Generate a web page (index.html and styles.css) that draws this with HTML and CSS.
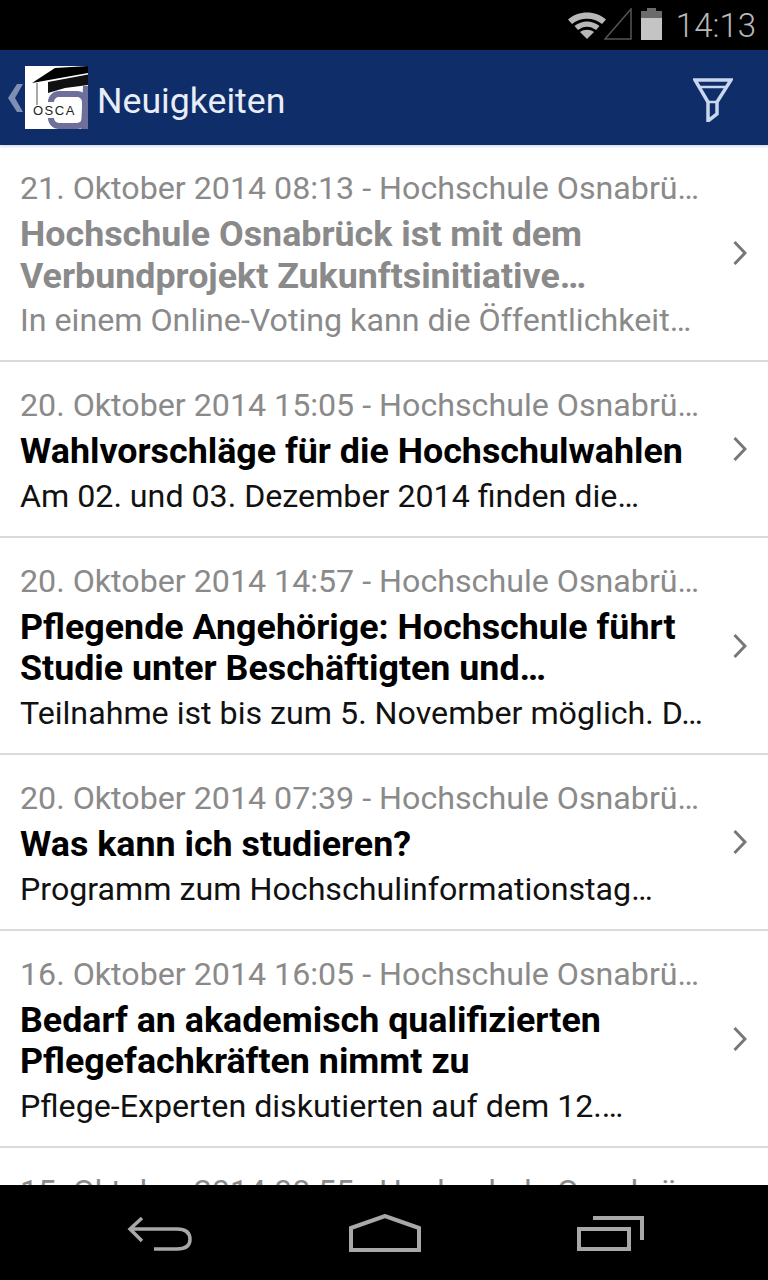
FILE: index.html
```html
<!DOCTYPE html>
<html lang="de">
<head>
  <meta charset="UTF-8">
  <title>Neuigkeiten</title>
  <link rel="stylesheet" href="styles.css">
</head>
<body>
<div class="status-bar">
  <svg class="wifi" width="40" height="30" viewBox="0 0 40 30">
    <path d="M1 10.500 C11 1 29 1 39 10.500 L35 15 C26.500 8 13.500 8 5 15 Z" fill="#b8b8b8"/>
    <path d="M7.500 17 C15 11 25 11 32.500 17 L29 21 C23.500 16.500 16.500 16.500 11 21 Z" fill="#b8b8b8"/>
    <path d="M13 23 C17 20 23 20 27 23 L20 30 Z" fill="#b8b8b8"/>
  </svg>
  <svg class="signal" width="28" height="32" viewBox="0 0 28 32">
    <path d="M1 31 L27 1 V31 Z" fill="none" stroke="#555" stroke-width="1.500"/>
  </svg>
  <svg class="battery" width="21" height="32" viewBox="0 0 21 32">
    <rect x="6" y="0" width="9" height="4" fill="#6b6b6b"/>
    <rect x="0" y="3" width="21" height="7" fill="#6b6b6b"/>
    <rect x="0" y="10" width="21" height="22" fill="#c4c4c4"/>
  </svg>
  <span class="clock">14:13</span>
</div>

<div class="action-bar">
  <svg class="back" width="15" height="28" viewBox="0 0 15 28">
    <path d="M9 0 H15 L7 14 L15 28 H9 L0 14 Z" fill="#7d8fb4"/>
  </svg>
  <svg class="logo" width="63" height="63" viewBox="0 0 63 63">
    <rect width="63" height="63" fill="#fff"/>
    <rect x="26" y="28" width="34" height="32" rx="8" fill="none" stroke="#6f7099" stroke-width="6"/>
    <path d="M58 20 H63 V63 H56 Z" fill="#6f7099"/>
    <rect x="8" y="36" width="42" height="16" fill="#fff"/>
    <path d="M7 17 L30 2 L63 0 V7 Z" fill="#000"/>
    <path d="M23 16 L63 8.500 V19 L40 22 L23 27 Z" fill="#111"/>
    <path d="M12 17 V39" stroke="#555" stroke-width="1"/>
    <text class="logo-text" x="8" y="49">OSCA</text>
  </svg>
  <h1 class="page-title">Neuigkeiten</h1>
  <svg class="filter" width="40" height="44" viewBox="0 0 40 44">
    <path d="M2 2 H38 L24 24 V36 L15 43 V24 Z" fill="none" stroke="#c9d6ee" stroke-width="3.500"/>
    <path d="M7 9 H33 M15 24 H24" stroke="#c9d6ee" stroke-width="2.500"/>
  </svg>
</div>

<div class="news-list">
  <div class="news-item read">
    <div class="news-text">
      <p class="news-date">21. Oktober 2014 08:13 - Hochschule Osnabrü…</p>
      <h2 class="news-title">Hochschule Osnabrück ist mit dem<br>Verbundprojekt Zukunftsinitiative…</h2>
      <p class="news-summary">In einem Online-Voting kann die Öffentlichkeit…</p>
    </div>
    <svg class="chevron" width="14" height="26" viewBox="0 0 14 26"><path d="M1.500 2 L12 13 L1.500 24" fill="none" stroke="#777" stroke-width="3"/></svg>
  </div>
  <div class="news-item">
    <div class="news-text">
      <p class="news-date">20. Oktober 2014 15:05 - Hochschule Osnabrü…</p>
      <h2 class="news-title">Wahlvorschläge für die Hochschulwahlen</h2>
      <p class="news-summary">Am 02. und 03. Dezember 2014 finden die…</p>
    </div>
    <svg class="chevron" width="14" height="26" viewBox="0 0 14 26"><path d="M1.500 2 L12 13 L1.500 24" fill="none" stroke="#777" stroke-width="3"/></svg>
  </div>
  <div class="news-item">
    <div class="news-text">
      <p class="news-date">20. Oktober 2014 14:57 - Hochschule Osnabrü…</p>
      <h2 class="news-title">Pflegende Angehörige: Hochschule führt<br>Studie unter Beschäftigten und…</h2>
      <p class="news-summary">Teilnahme ist bis zum 5. November möglich. D…</p>
    </div>
    <svg class="chevron" width="14" height="26" viewBox="0 0 14 26"><path d="M1.500 2 L12 13 L1.500 24" fill="none" stroke="#777" stroke-width="3"/></svg>
  </div>
  <div class="news-item">
    <div class="news-text">
      <p class="news-date">20. Oktober 2014 07:39 - Hochschule Osnabrü…</p>
      <h2 class="news-title">Was kann ich studieren?</h2>
      <p class="news-summary">Programm zum Hochschulinformationstag…</p>
    </div>
    <svg class="chevron" width="14" height="26" viewBox="0 0 14 26"><path d="M1.500 2 L12 13 L1.500 24" fill="none" stroke="#777" stroke-width="3"/></svg>
  </div>
  <div class="news-item">
    <div class="news-text">
      <p class="news-date">16. Oktober 2014 16:05 - Hochschule Osnabrü…</p>
      <h2 class="news-title">Bedarf an akademisch qualifizierten<br>Pflegefachkräften nimmt zu</h2>
      <p class="news-summary">Pflege-Experten diskutierten auf dem 12.…</p>
    </div>
    <svg class="chevron" width="14" height="26" viewBox="0 0 14 26"><path d="M1.500 2 L12 13 L1.500 24" fill="none" stroke="#777" stroke-width="3"/></svg>
  </div>
  <div class="news-item">
    <div class="news-text">
      <p class="news-date">15. Oktober 2014 08:55 - Hochschule Osnabrü…</p>
    </div>
  </div>
</div>

<div class="nav-bar">
  <svg width="66" height="36" viewBox="0 0 66 36">
    <path d="M15 3 L3 14 L15 26 M3 14 H50 Q63 14 63 24.500 Q63 34 50 34 H27" fill="none" stroke="#a8a8a8" stroke-width="3.500"/>
  </svg>
  <svg width="72" height="38" viewBox="0 0 72 38">
    <path d="M2 14 L36 2 L70 14 V36 H2 Z" fill="none" stroke="#a8a8a8" stroke-width="4"/>
  </svg>
  <svg width="68" height="36" viewBox="0 0 68 36">
    <path d="M2 14 H52 V34 H2 Z M16 3 H65 V25" fill="none" stroke="#a8a8a8" stroke-width="4"/>
  </svg>
</div>
</body>
</html>
```

FILE: styles.css
```css
* {
  box-sizing: border-box;
}

body {
  margin: 0;
  height: 100vh;
  display: flex;
  flex-direction: column;
  font-family: Roboto, sans-serif;
  background: #fff;
  overflow: hidden;
}

/* Statusleiste */
.status-bar {
  height: 50px;
  flex: none;
  background: #000;
  display: flex;
  align-items: center;
  justify-content: flex-end;
  padding: 0 12px 2px 0;
}

.wifi {
  margin-right: -3px;
}

.battery {
  margin-left: 9px;
}

.clock {
  margin: 3px 0 0 14px;
  color: #b8b8b8;
  font-size: 33px;
  font-weight: 300;
}

/* Titelleiste */
.action-bar {
  position: relative;
  height: 95px;
  flex: none;
  background: #0f2d69;
  box-shadow: 0 2px 2px #dde2ec;
  display: flex;
  align-items: center;
  padding: 0 35px 0 8px;
}

.back {
  margin-right: 2px;
}

.logo-text {
  font-family: "Liberation Sans", sans-serif;
  font-size: 13px;
  letter-spacing: 1.500px;
  fill: #222;
}

.page-title {
  margin: 6px 0 0 9px;
  flex: 1;
  color: #e8eef8;
  font-size: 35.700px;
  font-weight: 400;
}

.filter {
  margin-top: 5px;
}

/* Liste */
.news-list {
  flex: 1;
  min-height: 0;
  overflow: hidden;
}

.news-item {
  display: flex;
  align-items: center;
  padding: 21px 21px 18px 20px;
  border-bottom: 2px solid #dadada;
}

.news-text {
  flex: 1;
  min-width: 0;
}

.news-date,
.news-summary {
  margin: 0;
  font-size: 32.200px;
  line-height: 44px;
  white-space: nowrap;
}

.news-date {
  color: #8a8a8a;
}

.news-summary {
  color: #111;
}

.news-title {
  margin: 4px 0 1px;
  font-size: 35.800px;
  font-weight: 700;
  line-height: 41.600px;
  color: #000;
  white-space: nowrap;
}

.read .news-title,
.read .news-summary {
  color: #8a8a8a;
}

.chevron {
  flex: none;
  margin-bottom: 2px;
}

/* Navigationsleiste */
.nav-bar {
  height: 95px;
  flex: none;
  background: #000;
  display: flex;
  align-items: center;
  justify-content: space-between;
  padding: 0 123px 0 127px;
}
```
